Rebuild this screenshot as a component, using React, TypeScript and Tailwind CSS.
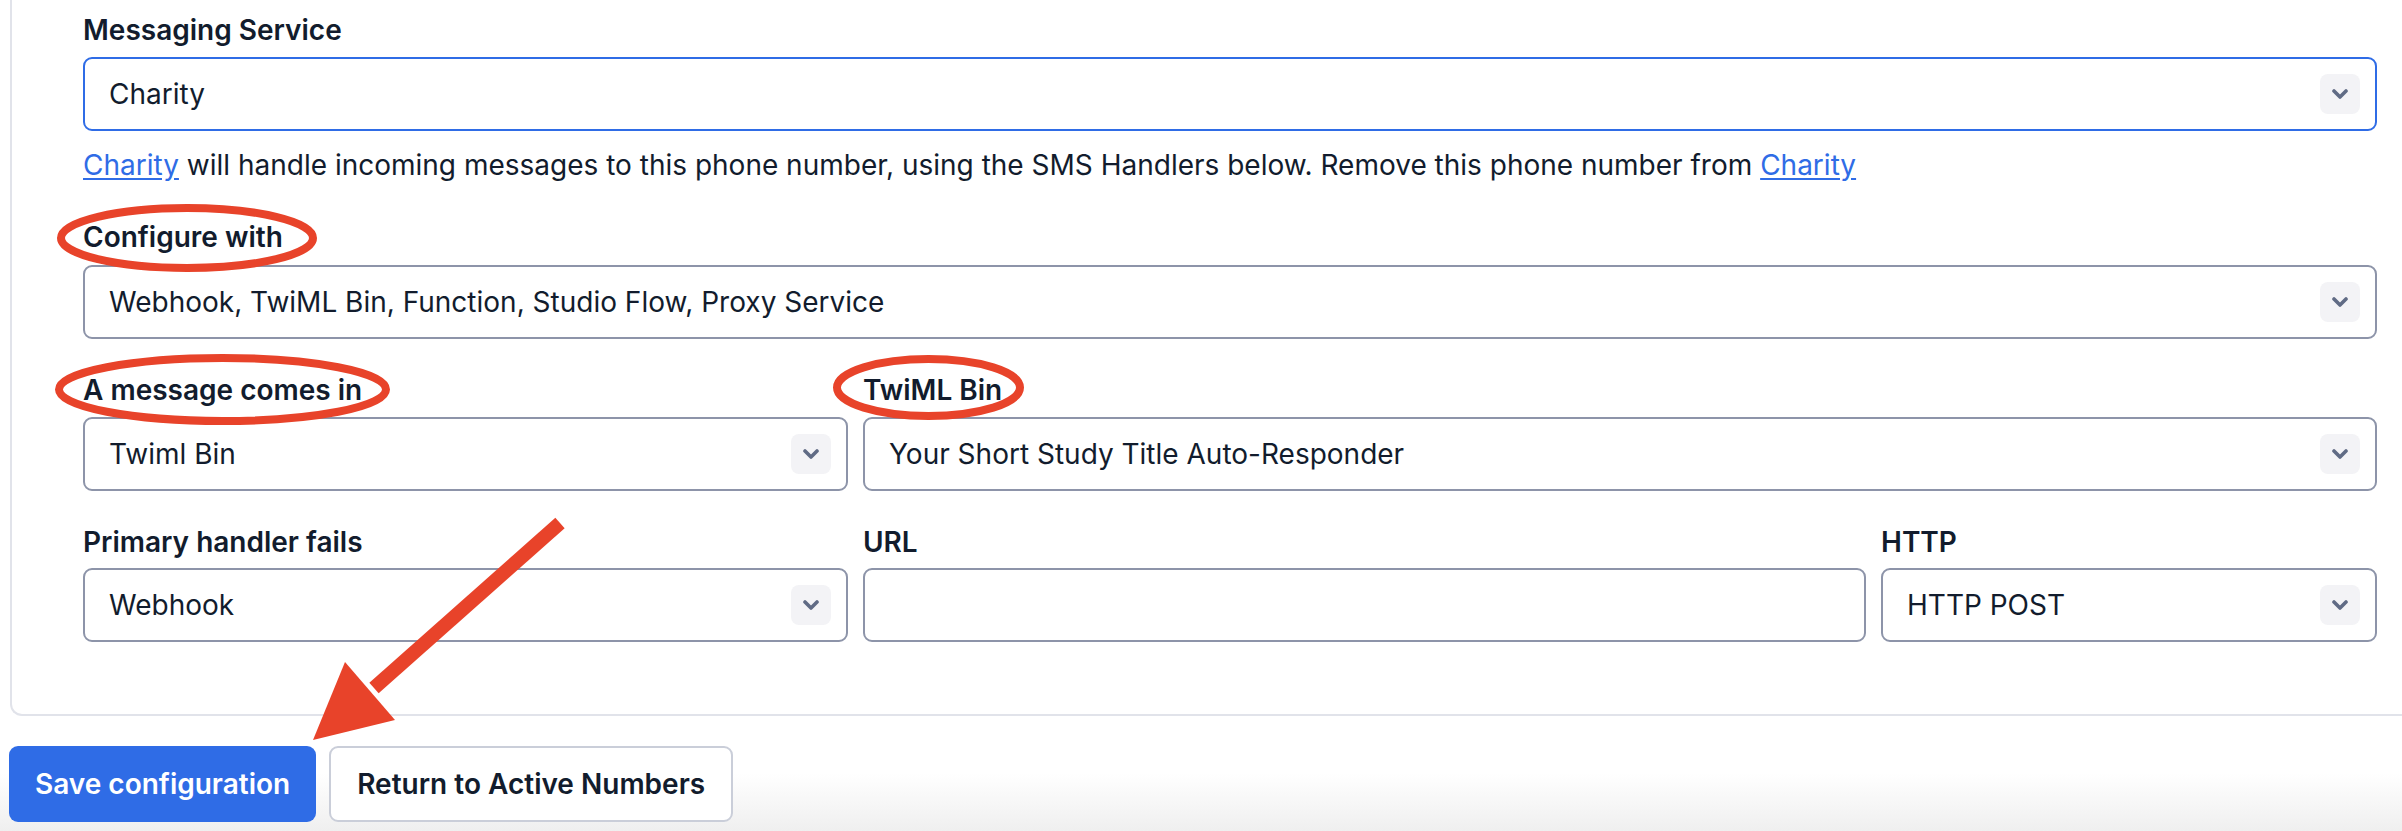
import clsx from "clsx";

const labelCls = "text-[28px] leading-[40px] font-semibold text-[#121c2d]";

function Chevron() {
  return (
    <svg width="16" height="10" viewBox="0 0 16 10" fill="none">
      <path d="M2 2l6 6 6-6" stroke="#606b85" strokeWidth="3.6" strokeLinecap="round" strokeLinejoin="round" />
    </svg>
  );
}

function Select({ value, focused }: { value: string; focused?: boolean }) {
  return (
    <div
      className={clsx(
        "flex h-[74px] items-center justify-between rounded-[9px] border-2 bg-white pl-[24px] pr-[15px]",
        focused ? "border-[#2f6ce6]" : "border-[#8d94a9]"
      )}
    >
      <span className="text-[28px] leading-[40px] text-[#121c2d]">{value}</span>
      <span className="flex h-10 w-10 items-center justify-center rounded-[8px] bg-[#f3f3f6]">
        <Chevron />
      </span>
    </div>
  );
}

function TextInput() {
  return <div className="h-[74px] rounded-[9px] border-2 border-[#8d94a9] bg-white" />;
}

function Annotations() {
  return (
    <svg
      className="pointer-events-none absolute left-0 top-0"
      width="2402"
      height="831"
      viewBox="0 0 2402 831"
      fill="none"
    >
      <ellipse cx="187" cy="238" rx="126" ry="30" stroke="#e8432a" strokeWidth="8" />
      <ellipse cx="222.5" cy="389.5" rx="163.5" ry="31.5" stroke="#e8432a" strokeWidth="8" />
      <ellipse cx="928.5" cy="387.5" rx="91.5" ry="28.5" stroke="#e8432a" strokeWidth="8" />
      <line x1="560" y1="523" x2="374" y2="688" stroke="#e8432a" strokeWidth="14" />
      <polygon points="345,662 395,720 313,740" fill="#e8432a" />
    </svg>
  );
}

export default function App() {
  return (
    <div className="relative h-[831px] w-[2402px] overflow-hidden bg-white font-[Inter,sans-serif]">
      {/* form card, top edge is cut off */}
      <div className="ml-[10px] rounded-bl-[12px] border-b-2 border-l-2 border-[#e1e3ea] bg-white pb-[72px] pl-[71px] pr-[25px] pt-[10px]">
        <div className={labelCls}>Messaging Service</div>
        <div className="mt-[7px]">
          <Select value="Charity" focused />
        </div>
        <p className="mt-[14px] text-[28px] leading-[40px] text-[#121c2d]">
          <a className="text-[#2f6ce6] underline underline-offset-[3px]">Charity</a> will handle incoming
          messages to this phone number, using the SMS Handlers below. Remove this phone number from{" "}
          <a className="text-[#2f6ce6] underline underline-offset-[3px]">Charity</a>
        </p>

        <div className={clsx(labelCls, "mt-[32px]")}>Configure with</div>
        <div className="mt-[8px]">
          <Select value="Webhook, TwiML Bin, Function, Studio Flow, Proxy Service" />
        </div>

        <div className="mt-[31px] grid grid-cols-[765px_1fr] gap-x-[15px]">
          <div>
            <div className={labelCls}>A message comes in</div>
            <div className="mt-[7px]">
              <Select value="Twiml Bin" />
            </div>
          </div>
          <div>
            <div className={labelCls}>TwiML Bin</div>
            <div className="mt-[7px]">
              <Select value="Your Short Study Title Auto-Responder" />
            </div>
          </div>
        </div>

        <div className="mt-[31px] grid grid-cols-[765px_1003px_1fr] gap-x-[15px]">
          <div>
            <div className={labelCls}>Primary handler fails</div>
            <div className="mt-[6px]">
              <Select value="Webhook" />
            </div>
          </div>
          <div>
            <div className={labelCls}>URL</div>
            <div className="mt-[6px]">
              <TextInput />
            </div>
          </div>
          <div>
            <div className={labelCls}>HTTP</div>
            <div className="mt-[6px]">
              <Select value="HTTP POST" />
            </div>
          </div>
        </div>
      </div>

      {/* footer actions */}
      <div className="flex gap-[13px] bg-linear-to-b from-white from-50% to-[#efefef] pb-[9px] pl-[9px] pt-[30px]">
        <button className="h-[76px] rounded-[9px] bg-[#2f6ce6] px-[26px] text-[28px] font-semibold text-white">
          Save configuration
        </button>
        <button className="h-[76px] rounded-[9px] border-2 border-[#caced9] bg-white px-[26px] text-[28px] font-semibold text-[#121c2d]">
          Return to Active Numbers
        </button>
      </div>

      <Annotations />
    </div>
  );
}
